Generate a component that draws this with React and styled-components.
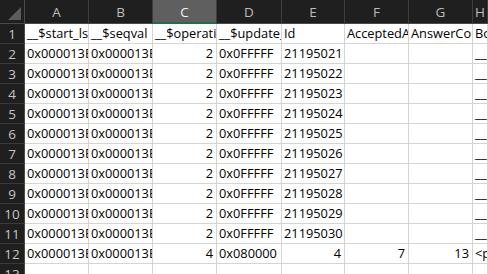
import React from "react";
import styled, { createGlobalStyle } from "styled-components";

const Global = createGlobalStyle`
  html, body {
    margin: 0;
    padding: 0;
    background: #ffffff;
    overflow: hidden;
  }
`;

const Sheet = styled.div`
  display: grid;
  grid-template-columns: 25px 64px 64px 64px 65px 63px 64px 64px 1fr;
  grid-template-rows: 24px repeat(13, 20px);
  width: 488px;
  height: 274px;
  overflow: hidden;
  font-family: "Open Sans", "Noto Sans", sans-serif;
`;

const Corner = styled.div`
  background: #1f1f1f;
  border-right: 1px solid #4a4a4a;
  border-bottom: 1px solid #4a4a4a;
  box-sizing: border-box;
  display: flex;
  align-items: flex-end;
  justify-content: flex-end;
  padding: 0 3px 3px 0;
`;

const ColHead = styled.div`
  box-sizing: border-box;
  background: ${(p) => (p.$selected ? "#5f5f5f" : "#1f1f1f")};
  color: ${(p) => (p.$selected ? "#f2f2f2" : "#bdbdbd")};
  border-right: 1px solid #3e3e3e;
  border-bottom: ${(p) => (p.$selected ? "2px solid #1e7145" : "1px solid #4a4a4a")};
  font-size: 13.5px;
  display: flex;
  align-items: center;
  justify-content: center;
  padding-top: 1px;
`;

const RowHead = styled.div`
  box-sizing: border-box;
  background: #1f1f1f;
  color: #c4c4c4;
  border-right: 1px solid #4a4a4a;
  border-bottom: 1px solid #3a3a3a;
  font-size: 13.5px;
  display: flex;
  align-items: center;
  justify-content: center;
`;

const Cell = styled.div`
  box-sizing: border-box;
  border-right: 1px solid #d4d4d4;
  border-bottom: 1px solid #d4d4d4;
  color: #000;
  font-size: 12.8px;
  line-height: 19px;
  padding: 0 3px 0 2px;
  white-space: nowrap;
  overflow: hidden;
  text-align: ${(p) => (p.$right ? "right" : "left")};
`;

const letters = ["A", "B", "C", "D", "E", "F", "G", "H"];

const header = [
  "__$start_lsn",
  "__$seqval",
  "__$operation",
  "__$update_mask",
  "Id",
  "AcceptedAnswerId",
  "AnswerCount",
  "Body",
];

const rows = [];
for (let i = 0; i < 10; i++) {
  rows.push([
    { v: "0x000013E800001F2A0003" },
    { v: "0x000013E800001F2A0002" },
    { v: "2", r: true },
    { v: "0x0FFFFF" },
    { v: String(21195021 + i) },
    { v: "" },
    { v: "" },
    { v: "___" },
  ]);
}
rows.push([
  { v: "0x000013E800001F2B0004" },
  { v: "0x000013E800001F2B0002" },
  { v: "4", r: true },
  { v: "0x080000" },
  { v: "4", r: true },
  { v: "7", r: true },
  { v: "13", r: true },
  { v: "<p>I want to use a track-bar" },
]);

export default function App() {
  return (
    <>
      <Global />
      <Sheet>
        <Corner>
          <svg width="13" height="13" viewBox="0 0 13 13">
            <polygon points="13,0 13,13 0,13" fill="#5c5c5c" />
          </svg>
        </Corner>
        {letters.map((l) => (
          <ColHead key={l} $selected={l === "C"}>
            {l}
          </ColHead>
        ))}

        <RowHead>1</RowHead>
        {header.map((h, i) => (
          <Cell key={"h" + i}>{h}</Cell>
        ))}

        {rows.map((row, ri) => (
          <React.Fragment key={ri}>
            <RowHead>{ri + 2}</RowHead>
            {row.map((c, ci) => (
              <Cell key={ci} $right={c.r}>
                {c.v}
              </Cell>
            ))}
          </React.Fragment>
        ))}

        <RowHead>13</RowHead>
        {letters.map((l) => (
          <Cell key={"e" + l} />
        ))}
      </Sheet>
    </>
  );
}
